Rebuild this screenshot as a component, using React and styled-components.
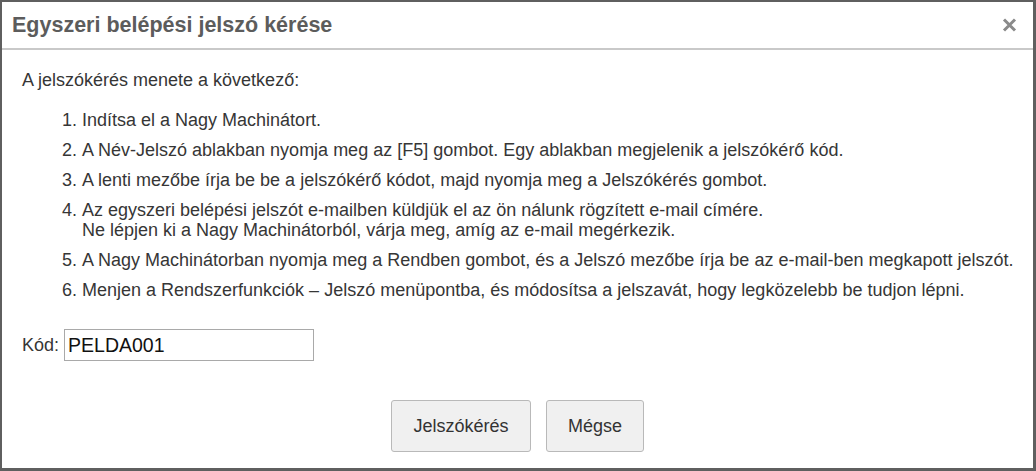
import React from 'react';
import styled, {createGlobalStyle} from 'styled-components';

const GlobalStyle = createGlobalStyle`
  html, body {
    margin: 0;
    padding: 0;
    background: #ffffff;
  }
  body {
    font-family: "Liberation Sans", Arial, sans-serif;
  }
`

const steps = [
    ['Indítsa el a Nagy Machinátort.'],
    ['A Név-Jelszó ablakban nyomja meg az [F5] gombot. Egy ablakban megjelenik a jelszókérő kód.'],
    ['A lenti mezőbe írja be be a jelszókérő kódot, majd nyomja meg a Jelszókérés gombot.'],
    [
        'Az egyszeri belépési jelszót e-mailben küldjük el az ön nálunk rögzített e-mail címére.',
        'Ne lépjen ki a Nagy Machinátorból, várja meg, amíg az e-mail megérkezik.',
    ],
    ['A Nagy Machinátorban nyomja meg a Rendben gombot, és a Jelszó mezőbe írja be az e-mail-ben megkapott jelszót.'],
    ['Menjen a Rendszerfunkciók – Jelszó menüpontba, és módosítsa a jelszavát, hogy legközelebb be tudjon lépni.'],
];

const App = () => {
    return (
        <>
            <GlobalStyle/>
            <Dialog>
                <Header>
                    <Title>Egyszeri belépési jelszó kérése</Title>
                    <CloseButton aria-label="Bezárás">
                        <svg width="15" height="14" viewBox="0 0 15 14">
                            <path d="M2 1.5 L13 12.5 M13 1.5 L2 12.5" stroke="#8a8a8a" strokeWidth="3" strokeLinecap="butt"/>
                        </svg>
                    </CloseButton>
                </Header>
                <Body>
                    <Intro>A jelszókérés menete a következő:</Intro>
                    <StepList>
                        {steps.map((lines, key) => (
                            <Step key={key}>
                                {lines.map((line, i) => (
                                    <React.Fragment key={i}>
                                        {i > 0 && <br/>}
                                        {line}
                                    </React.Fragment>
                                ))}
                            </Step>
                        ))}
                    </StepList>
                    <CodeRow>
                        <CodeLabel htmlFor="kod">Kód:</CodeLabel>
                        <CodeInput id="kod" defaultValue="PELDA001"/>
                    </CodeRow>
                    <ButtonRow>
                        <Button width="140px">Jelszókérés</Button>
                        <Button width="98px">Mégse</Button>
                    </ButtonRow>
                </Body>
            </Dialog>
        </>
    );
};

const Dialog = styled.div`
  width: 1036px;
  height: 471px;
  box-sizing: border-box;
  background: #ffffff;
  border-style: solid;
  border-color: #5f5f5f;
  border-width: 2px 3px 3px 2px;
  display: flex;
  flex-direction: column;
  color: #363636;
`

const Header = styled.div`
  height: 46px;
  flex: none;
  display: flex;
  align-items: center;
  justify-content: space-between;
  padding: 0 16px 0 10px;
  border-bottom: 2px solid #c9c9c9;
`

const Title = styled.h1`
  margin: 0;
  font-size: 21.5px;
  font-weight: bold;
  color: #5c5c5c;
  line-height: 24px;
`

const CloseButton = styled.button`
  border: none;
  background: none;
  padding: 0;
  width: 16px;
  height: 16px;
  display: flex;
  align-items: center;
  justify-content: center;
  cursor: pointer;
`

const Body = styled.div`
  padding: 20px 20px 0 20px;
  font-size: 18px;
  line-height: 20px;
`

const Intro = styled.p`
  margin: 0;
`

const StepList = styled.ol`
  margin: 20px 0 0 0;
  padding-left: 60px;
`

const Step = styled.li`
  margin-bottom: 10px;
  white-space: nowrap;
  &:last-child {
    margin-bottom: 0;
  }
`

const CodeRow = styled.div`
  display: flex;
  align-items: center;
  gap: 5px;
  margin-top: 29px;
  height: 32px;
`

const CodeLabel = styled.label`
  font-size: 18px;
`

const CodeInput = styled.input`
  width: 250px;
  height: 32px;
  box-sizing: border-box;
  border: 1px solid #a9a9a9;
  border-radius: 0;
  padding: 0 3px;
  font-family: "Liberation Sans", Arial, sans-serif;
  font-size: 19.5px;
  color: #111111;
  outline: none;
`

const ButtonRow = styled.div`
  display: flex;
  justify-content: center;
  gap: 15px;
  margin-top: 39px;
`

const Button = styled.button`
  width: ${p => p.width};
  height: 52px;
  box-sizing: border-box;
  background: #f0f0f0;
  border: 1px solid #b9b9b9;
  border-radius: 3px;
  font-family: "Liberation Sans", Arial, sans-serif;
  font-size: 18px;
  color: #333333;
  cursor: pointer;
`

export default App;
